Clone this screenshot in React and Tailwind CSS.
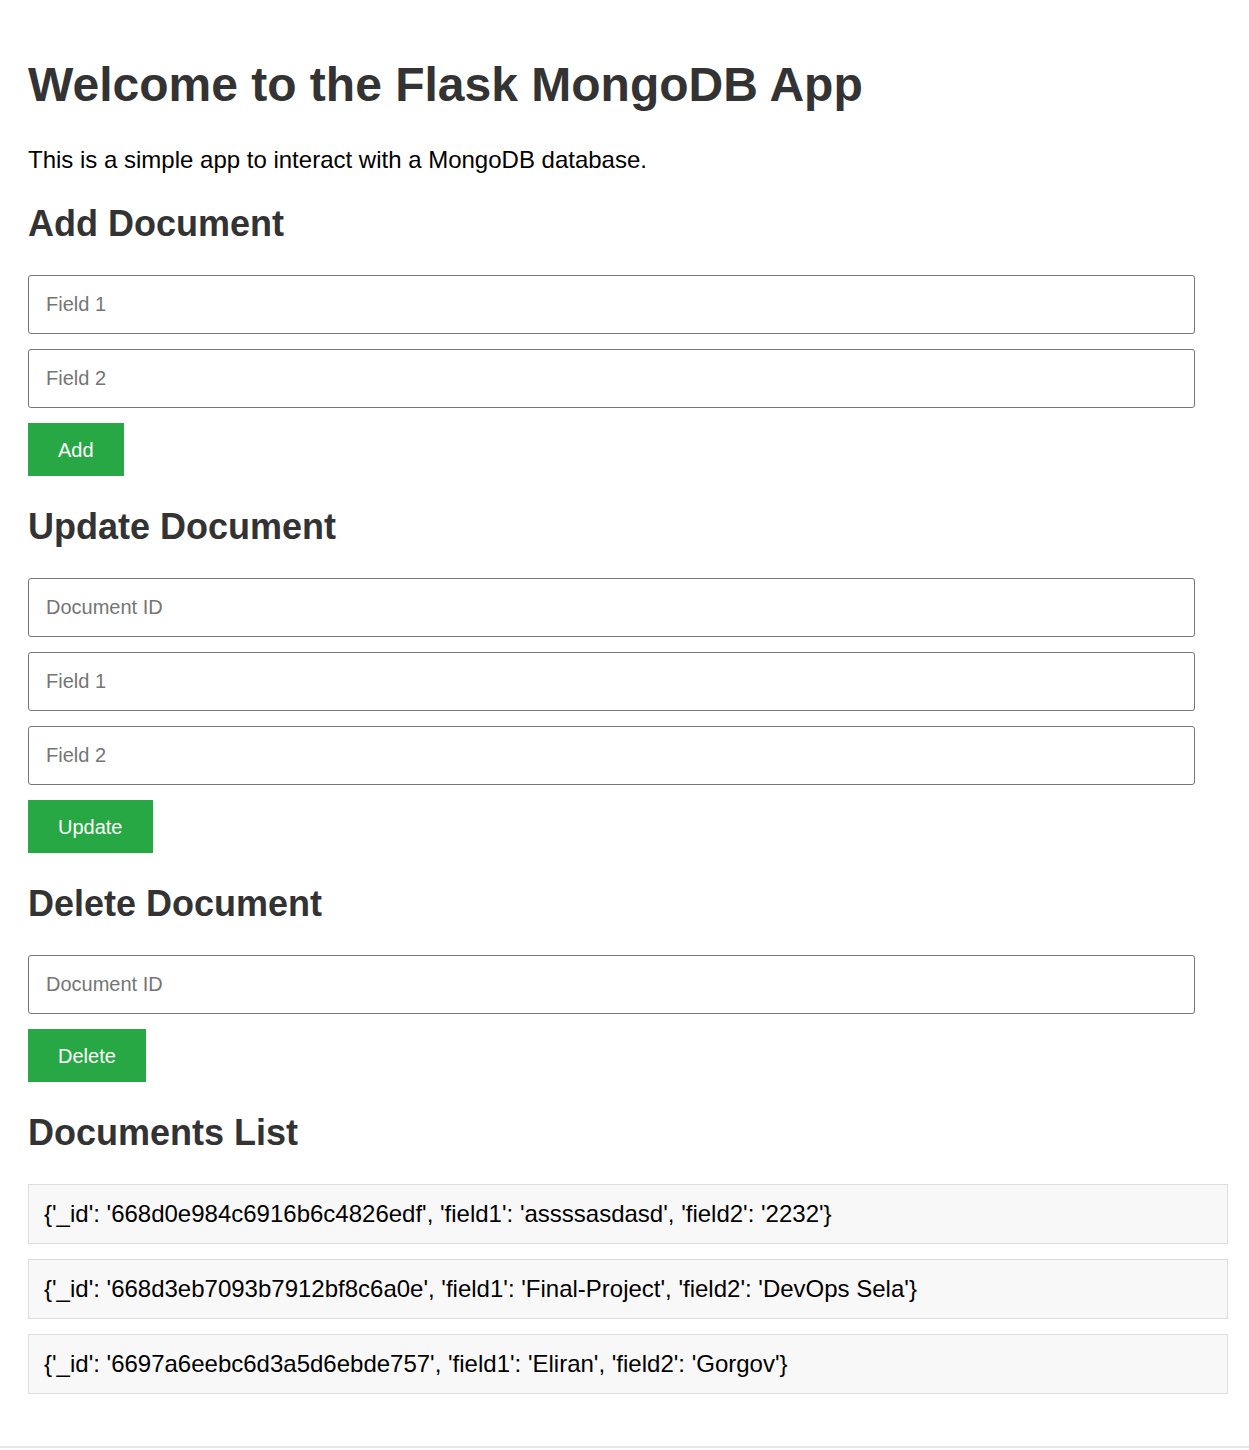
const docs = [
  "{'_id': '668d0e984c6916b6c4826edf', 'field1': 'assssasdasd', 'field2': '2232'}",
  "{'_id': '668d3eb7093b7912bf8c6a0e', 'field1': 'Final-Project', 'field2': 'DevOps Sela'}",
  "{'_id': '6697a6eebc6d3a5d6ebde757', 'field1': 'Eliran', 'field2': 'Gorgov'}",
];

function Field({ placeholder }) {
  return (
    <input
      type="text"
      placeholder={placeholder}
      className="block w-[1167px] h-[59px] border border-[#767676] rounded-[3px] px-[17px] text-[20px] text-black placeholder:text-[#757575] outline-none"
    />
  );
}

function Btn({ children }) {
  return (
    <button className="self-start h-[53px] bg-[#28a745] text-white text-[20px] px-[30px] leading-[26px]">
      {children}
    </button>
  );
}

function Heading({ children }) {
  return (
    <h2 className="text-[36px] leading-[41px] font-bold text-[#333] mt-[30px] mb-[31px]">
      {children}
    </h2>
  );
}

export default function App() {
  return (
    <div
      className="min-h-[1448px] bg-white border-b-2 border-[#e6e6e6] px-[28px] pt-[55px] pb-[40px]"
      style={{ fontFamily: '"Liberation Sans", Arial, sans-serif' }}
    >
      <div className="w-[1200px]">
        <h1 className="text-[48px] leading-[60px] font-bold text-[#333]">
          Welcome to the Flask MongoDB App
        </h1>
        <p className="text-[24px] leading-[26px] text-black mt-[32px]">
          This is a simple app to interact with a MongoDB database.
        </p>

        {/* Add */}
        <Heading>Add Document</Heading>
        <div className="flex flex-col gap-[15px]">
          <Field placeholder="Field 1" />
          <Field placeholder="Field 2" />
          <Btn>Add</Btn>
        </div>

        {/* Update */}
        <Heading>Update Document</Heading>
        <div className="flex flex-col gap-[15px]">
          <Field placeholder="Document ID" />
          <Field placeholder="Field 1" />
          <Field placeholder="Field 2" />
          <Btn>Update</Btn>
        </div>

        {/* Delete */}
        <Heading>Delete Document</Heading>
        <div className="flex flex-col gap-[15px]">
          <Field placeholder="Document ID" />
          <Btn>Delete</Btn>
        </div>

        {/* List */}
        <Heading>Documents List</Heading>
        <ul className="flex flex-col gap-[15px]">
          {docs.map((d) => (
            <li
              key={d}
              className="h-[60px] flex items-center bg-[#f8f8f8] border border-[#dddddd] px-[15px] text-[24px] text-black"
            >
              {d}
            </li>
          ))}
        </ul>
      </div>
    </div>
  );
}
